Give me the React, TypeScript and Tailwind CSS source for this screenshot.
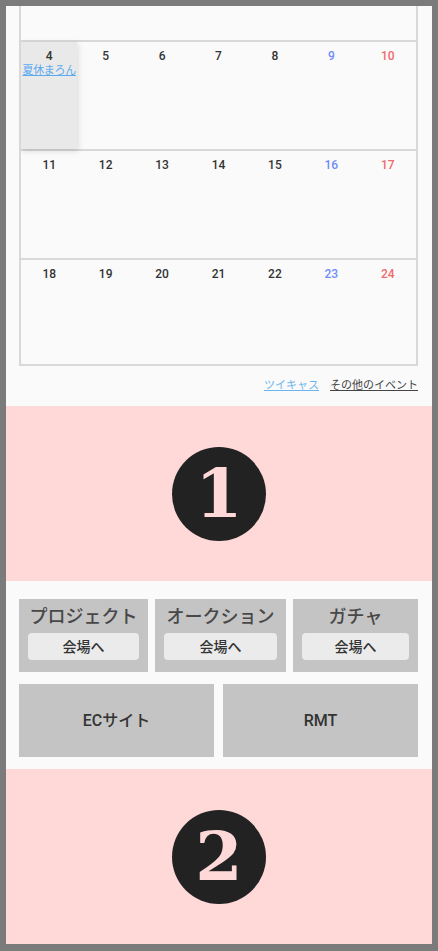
import React from 'react';

interface Day {
  n: number;
  kind: 'weekday' | 'sat' | 'sun';
  event?: string;
}

const weeks: Day[][] = [
  [
    { n: 4, kind: 'weekday', event: '夏休まろん' },
    { n: 5, kind: 'weekday' },
    { n: 6, kind: 'weekday' },
    { n: 7, kind: 'weekday' },
    { n: 8, kind: 'weekday' },
    { n: 9, kind: 'sat' },
    { n: 10, kind: 'sun' },
  ],
  [11, 12, 13, 14, 15, 16, 17].map((n, i) => ({ n, kind: i === 5 ? 'sat' : i === 6 ? 'sun' : 'weekday' })),
  [18, 19, 20, 21, 22, 23, 24].map((n, i) => ({ n, kind: i === 5 ? 'sat' : i === 6 ? 'sun' : 'weekday' })),
];

const dayColor = {
  weekday: 'text-[#333333]',
  sat: 'text-[#6f8dfb]',
  sun: 'text-[#f06a6a]',
};

const DayCell: React.FC<{ day: Day }> = ({ day }) => (
  <div
    className={`flex flex-col items-center pt-[7px] ${
      day.event ? 'bg-[#e9e9e9] shadow-[1px_2px_6px_rgba(0,0,0,0.14)] relative z-10' : ''
    }`}
  >
    <span className={`text-[12px] leading-[14px] font-medium ${dayColor[day.kind]}`}>{day.n}</span>
    {day.event && (
      <a className="mt-[1px] text-[11px] leading-[13px] text-[#5aaaf0] underline whitespace-nowrap tracking-[-0.3px]">
        {day.event}
      </a>
    )}
  </div>
);

const Medallion: React.FC<{ num: string; className?: string }> = ({ num, className = '' }) => (
  <section className={`bg-[#ffd8d8] flex items-center justify-center ${className}`}>
    <div className="w-[94px] h-[94px] rounded-full bg-[#222222] flex items-center justify-center">
      <span
        className="text-[#ffd8d8] font-bold text-[68px] leading-none -mt-[1px]"
        style={{ fontFamily: '"DejaVu Serif", "Liberation Serif", serif' }}
      >
        {num}
      </span>
    </div>
  </section>
);

const VenueCard: React.FC<{ title: string; width: string }> = ({ title, width }) => (
  <div className={`${width} h-[73px] bg-[#c4c4c4] flex flex-col items-center px-[9px] pt-[6px]`}>
    <span className="text-[18px] leading-[24px] font-medium text-[#484848]">{title}</span>
    <button className="mt-[4px] w-full h-[27px] rounded-[4px] bg-[#ebebeb] text-[14px] leading-none font-medium text-[#333333]">
      会場へ
    </button>
  </div>
);

export default function App() {
  return (
    <div
      className="h-[951px] bg-[#7b7b7b] px-[6px] pt-[6px] pb-[7px]"
      style={{ fontFamily: 'Roboto, "Noto Sans CJK JP", sans-serif' }}
    >
      <div className="h-full bg-[#fafafa] flex flex-col overflow-hidden">
        {/* Calendar (scrolled) */}
        <div className="pl-[13px] pr-[14px]">
          <div className="h-[360px] border-x-2 border-b-2 border-[#d8d8d8] overflow-hidden">
            <div className="h-[34px]" />
            {weeks.map((week, i) => (
              <div key={i} className="h-[109px] border-t-2 border-[#d8d8d8] grid grid-cols-7">
                {week.map((d) => (
                  <DayCell key={d.n} day={d} />
                ))}
              </div>
            ))}
          </div>
          <div className="h-[40px] flex items-center justify-end gap-[11px] text-[11px]">
            <a className="text-[#6cb4f0] underline">ツイキャス</a>
            <a className="text-[#444444] underline">その他のイベント</a>
          </div>
        </div>

        <Medallion num="1" className="h-[175px]" />

        {/* Venue links */}
        <section className="pl-[13px] pr-[14px] pt-[18px] pb-[12px] flex flex-col gap-[12px]">
          <div className="flex gap-[7px]">
            <VenueCard title="プロジェクト" width="w-[129px]" />
            <VenueCard title="オークション" width="w-[131px]" />
            <VenueCard title="ガチャ" width="flex-1" />
          </div>
          <div className="flex gap-[9px]">
            <div className="flex-1 h-[73px] bg-[#c4c4c4] flex items-center justify-center text-[16px] font-medium text-[#333333]">
              ECサイト
            </div>
            <div className="flex-1 h-[73px] bg-[#c4c4c4] flex items-center justify-center text-[16px] font-medium text-[#333333]">
              RMT
            </div>
          </div>
        </section>

        <Medallion num="2" className="flex-1" />
      </div>
    </div>
  );
}
